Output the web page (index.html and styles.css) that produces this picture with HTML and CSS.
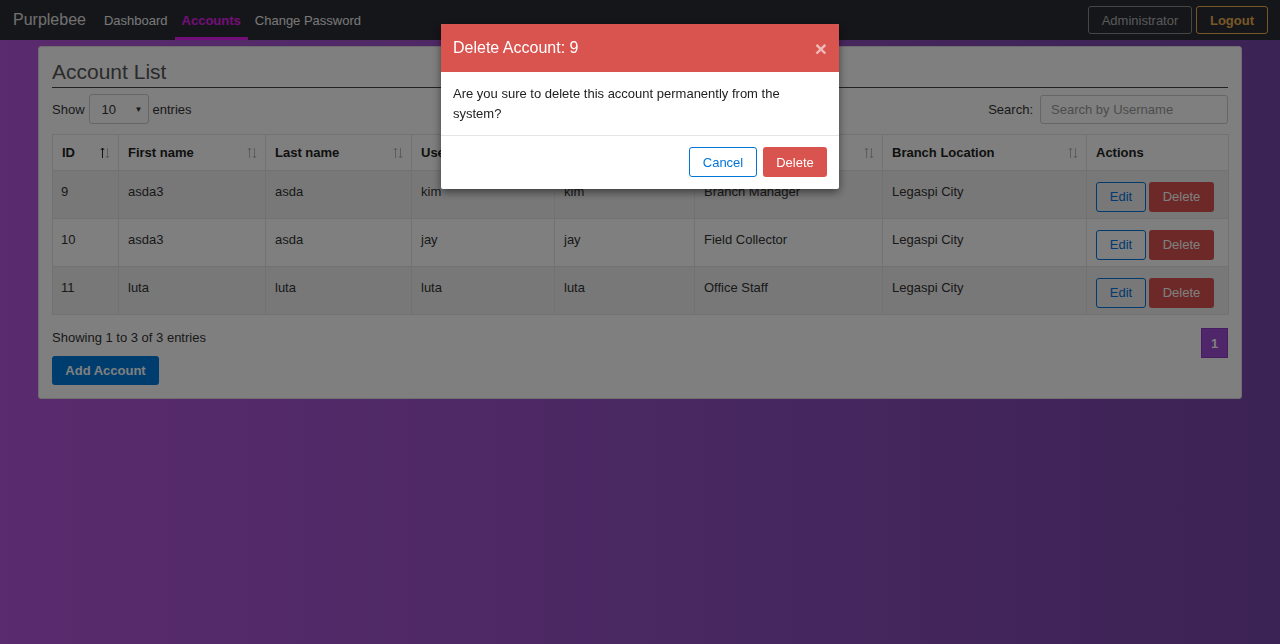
FILE: index.html
```html
<!DOCTYPE html>
<html lang="en">
<head>
<meta charset="utf-8">
<title>Purplebee - Accounts</title>
<link rel="stylesheet" href="styles.css">
</head>
<body>
<nav class="navbar">
  <span class="brand">Purplebee</span>
  <a class="nav-link">Dashboard</a>
  <a class="nav-link active">Accounts</a>
  <a class="nav-link">Change Password</a>
  <div class="nav-right">
    <span class="btn-admin">Administrator</span>
    <span class="btn-logout">Logout</span>
  </div>
</nav>

<main class="page">
  <section class="card">
    <h2 class="card-title">Account List</h2>
    <div class="controls">
      <div class="length">
        <span>Show</span>
        <span class="select"><span>10</span><span class="caret">&#9660;</span></span>
        <span>entries</span>
      </div>
      <div class="search">
        <span>Search:</span>
        <span class="search-input">Search by Username</span>
      </div>
    </div>

    <table class="accounts">
      <colgroup>
        <col class="c-id"><col class="c-first"><col class="c-last"><col class="c-user"><col class="c-pass"><col class="c-pos"><col class="c-branch"><col class="c-act">
      </colgroup>
      <thead>
        <tr>
          <th><div class="th-in">ID<svg class="sort" width="10" height="12" viewBox="0 0 10 12"><path d="M2.5 11V1M0.8 3L2.5 1L4.2 3" stroke="#222" fill="none" stroke-width="1"/><path d="M7.5 1V11M5.8 9L7.5 11L9.2 9" stroke="#bbb" fill="none" stroke-width="1"/></svg></div></th>
          <th><div class="th-in">First name<svg class="sort" width="10" height="12" viewBox="0 0 10 12"><path d="M2.5 11V1M0.8 3L2.5 1L4.2 3M7.5 1V11M5.8 9L7.5 11L9.2 9" stroke="#bbb" fill="none" stroke-width="1"/></svg></div></th>
          <th><div class="th-in">Last name<svg class="sort" width="10" height="12" viewBox="0 0 10 12"><path d="M2.5 11V1M0.8 3L2.5 1L4.2 3M7.5 1V11M5.8 9L7.5 11L9.2 9" stroke="#bbb" fill="none" stroke-width="1"/></svg></div></th>
          <th><div class="th-in">Username<svg class="sort" width="10" height="12" viewBox="0 0 10 12"><path d="M2.5 11V1M0.8 3L2.5 1L4.2 3M7.5 1V11M5.8 9L7.5 11L9.2 9" stroke="#bbb" fill="none" stroke-width="1"/></svg></div></th>
          <th><div class="th-in">Password<svg class="sort" width="10" height="12" viewBox="0 0 10 12"><path d="M2.5 11V1M0.8 3L2.5 1L4.2 3M7.5 1V11M5.8 9L7.5 11L9.2 9" stroke="#bbb" fill="none" stroke-width="1"/></svg></div></th>
          <th><div class="th-in">Position<svg class="sort" width="10" height="12" viewBox="0 0 10 12"><path d="M2.5 11V1M0.8 3L2.5 1L4.2 3M7.5 1V11M5.8 9L7.5 11L9.2 9" stroke="#bbb" fill="none" stroke-width="1"/></svg></div></th>
          <th><div class="th-in">Branch Location<svg class="sort" width="10" height="12" viewBox="0 0 10 12"><path d="M2.5 11V1M0.8 3L2.5 1L4.2 3M7.5 1V11M5.8 9L7.5 11L9.2 9" stroke="#bbb" fill="none" stroke-width="1"/></svg></div></th>
          <th><div class="th-in">Actions</div></th>
        </tr>
      </thead>
      <tbody>
        <tr class="odd">
          <td>9</td><td>asda3</td><td>asda</td><td>kim</td><td>kim</td><td>Branch Manager</td><td>Legaspi City</td>
          <td class="actions"><span class="btn-edit">Edit</span><span class="btn-del">Delete</span></td>
        </tr>
        <tr>
          <td>10</td><td>asda3</td><td>asda</td><td>jay</td><td>jay</td><td>Field Collector</td><td>Legaspi City</td>
          <td class="actions"><span class="btn-edit">Edit</span><span class="btn-del">Delete</span></td>
        </tr>
        <tr class="odd">
          <td>11</td><td>luta</td><td>luta</td><td>luta</td><td>luta</td><td>Office Staff</td><td>Legaspi City</td>
          <td class="actions"><span class="btn-edit">Edit</span><span class="btn-del">Delete</span></td>
        </tr>
      </tbody>
    </table>

    <div class="footer-row">
      <div class="footer-left">
        <div class="info">Showing 1 to 3 of 3 entries</div>
        <span class="btn-add">Add Account</span>
      </div>
      <span class="page-num">1</span>
    </div>
  </section>
</main>

<div class="backdrop"></div>

<div class="modal">
  <div class="modal-header">
    <span class="modal-title">Delete Account: 9</span>
    <span class="modal-close">&times;</span>
  </div>
  <div class="modal-body">Are you sure to delete this account permanently from the system?</div>
  <div class="modal-footer">
    <span class="btn-cancel">Cancel</span>
    <span class="btn-confirm">Delete</span>
  </div>
</div>
</body>
</html>
```

FILE: styles.css
```css
* { box-sizing: border-box; }

html, body {
  margin: 0;
  padding: 0;
}

body {
  min-height: 100vh;
  font-family: "Liberation Sans", Arial, sans-serif;
  font-size: 13px;
  color: #333;
  background: linear-gradient(to right, #b456dc 0%, #9450c4 50%, #7846aa 100%);
}

/* Navbar */
.navbar {
  height: 40px;
  background: #2a2c32;
  display: flex;
  align-items: center;
  padding: 0 12px 0 13px;
}

.brand {
  font-size: 16px;
  color: #e0e0e0;
  margin-right: 11px;
}

.nav-link {
  height: 40px;
  display: flex;
  align-items: center;
  padding: 0 7px;
  color: #f0f0f0;
  font-size: 13px;
  border-bottom: 3px solid transparent;
  border-top: 3px solid transparent;
}

.nav-link.active {
  color: #e61ef0;
  font-weight: bold;
  border-bottom-color: #e61ef0;
}

.nav-right {
  margin-left: auto;
  display: flex;
  gap: 4px;
}

.btn-admin, .btn-logout {
  height: 28px;
  display: flex;
  align-items: center;
  border-radius: 3px;
  font-size: 13px;
}

.btn-admin {
  width: 104px;
  justify-content: center;
  border: 1px solid #8c8c8c;
  color: #b4b4b4;
}

.btn-logout {
  width: 72px;
  justify-content: center;
  border: 1px solid #f0b050;
  color: #f0b050;
  font-weight: bold;
}

/* Page */
.page {
  padding: 6px 38px 0;
}

.card {
  background: #fff;
  border: 1px solid #ddd;
  border-radius: 3px;
  padding: 10px 13px 13px;
}

.card-title {
  margin: 0;
  font-size: 21px;
  font-weight: normal;
  line-height: 30px;
  color: #555;
  border-bottom: 1px solid #444;
}

.controls {
  margin-top: 6px;
  display: flex;
  justify-content: space-between;
  align-items: center;
  height: 30px;
}

.length, .search {
  display: flex;
  align-items: center;
  gap: 4px;
}

.select {
  width: 60px;
  height: 30px;
  border: 1px solid #ccc;
  border-radius: 3px;
  display: flex;
  align-items: center;
  justify-content: space-between;
  padding: 0 5px 0 12px;
}

.caret {
  font-size: 8px;
  color: #333;
}

.search { gap: 7px; }

.search-input {
  width: 188px;
  height: 29px;
  border: 1px solid #ccc;
  border-radius: 3px;
  display: flex;
  align-items: center;
  padding: 0 10px;
  color: #999;
}

/* Table */
.accounts {
  margin-top: 10px;
  width: 100%;
  border-collapse: collapse;
  table-layout: fixed;
  border: 1px solid #e4e4e4;
}

.c-id { width: 66px; }
.c-first { width: 147px; }
.c-last { width: 146px; }
.c-user { width: 143px; }
.c-pass { width: 140px; }
.c-pos { width: 188px; }
.c-branch { width: 204px; }
.c-act { width: 142px; }

.accounts th {
  height: 36px;
  padding: 0 8px 0 9px;
  text-align: left;
  font-weight: bold;
  color: #222;
  border: 1px solid #e4e4e4;
}

.th-in {
  display: flex;
  justify-content: space-between;
  align-items: center;
}

.sort { flex: none; }

.accounts td {
  height: 48px;
  padding: 11px 9px 0 9px;
  vertical-align: top;
  line-height: 20px;
  border: 1px solid #e4e4e4;
  color: #333;
}

.accounts td:first-child { padding-left: 8px; }

.accounts tr.odd td { background: #f0f0f0; }

.accounts td.actions {
  padding: 11px 9px 0 9px;
  white-space: nowrap;
}

.btn-edit, .btn-del {
  display: inline-flex;
  align-items: center;
  justify-content: center;
  height: 30px;
  border-radius: 3px;
  font-size: 13px;
  vertical-align: top;
}

.btn-edit {
  width: 50px;
  border: 1px solid #0275d8;
  color: #0275d8;
  margin-right: 3px;
}

.btn-del {
  width: 65px;
  background: #d9534f;
  color: #fff;
}

/* Footer row */
.footer-row {
  margin-top: 13px;
  display: flex;
  justify-content: space-between;
  align-items: flex-start;
}

.info {
  line-height: 20px;
}

.btn-add {
  margin-top: 8px;
  display: inline-flex;
  align-items: center;
  justify-content: center;
  width: 107px;
  height: 29px;
  border-radius: 3px;
  background: #007bdf;
  color: #fff;
  font-weight: bold;
}

.page-num {
  width: 27px;
  height: 30px;
  display: flex;
  align-items: center;
  justify-content: center;
  background: #a04cd4;
  border: 1px solid #8a3cc0;
  color: #fff;
  font-weight: bold;
}

/* Modal */
.backdrop {
  position: fixed;
  inset: 0;
  background: rgba(0, 0, 0, 0.5);
}

.modal {
  position: fixed;
  top: 24px;
  left: 441px;
  width: 398px;
  background: #fff;
  border-radius: 2px;
  box-shadow: 0 3px 9px rgba(0, 0, 0, 0.5);
  overflow: hidden;
}

.modal-header {
  height: 48px;
  background: #d9534f;
  display: flex;
  align-items: center;
  justify-content: space-between;
  padding: 0 12px;
}

.modal-title {
  color: #fff;
  font-size: 16px;
}

.modal-close {
  color: #fff;
  opacity: 0.6;
  font-size: 21px;
  font-weight: bold;
  line-height: 1;
}

.modal-body {
  padding: 12px 12px 11px;
  line-height: 20px;
  font-size: 13px;
  color: #222;
  border-bottom: 1px solid #e5e5e5;
}

.modal-footer {
  padding: 11px 12px 12px;
  display: flex;
  justify-content: flex-end;
  gap: 6px;
}

.btn-cancel, .btn-confirm {
  height: 30px;
  display: flex;
  align-items: center;
  justify-content: center;
  border-radius: 3px;
  font-size: 13px;
}

.btn-cancel {
  width: 68px;
  border: 1px solid #0275d8;
  color: #0275d8;
}

.btn-confirm {
  width: 64px;
  background: #d9534f;
  color: #fff;
}
```
